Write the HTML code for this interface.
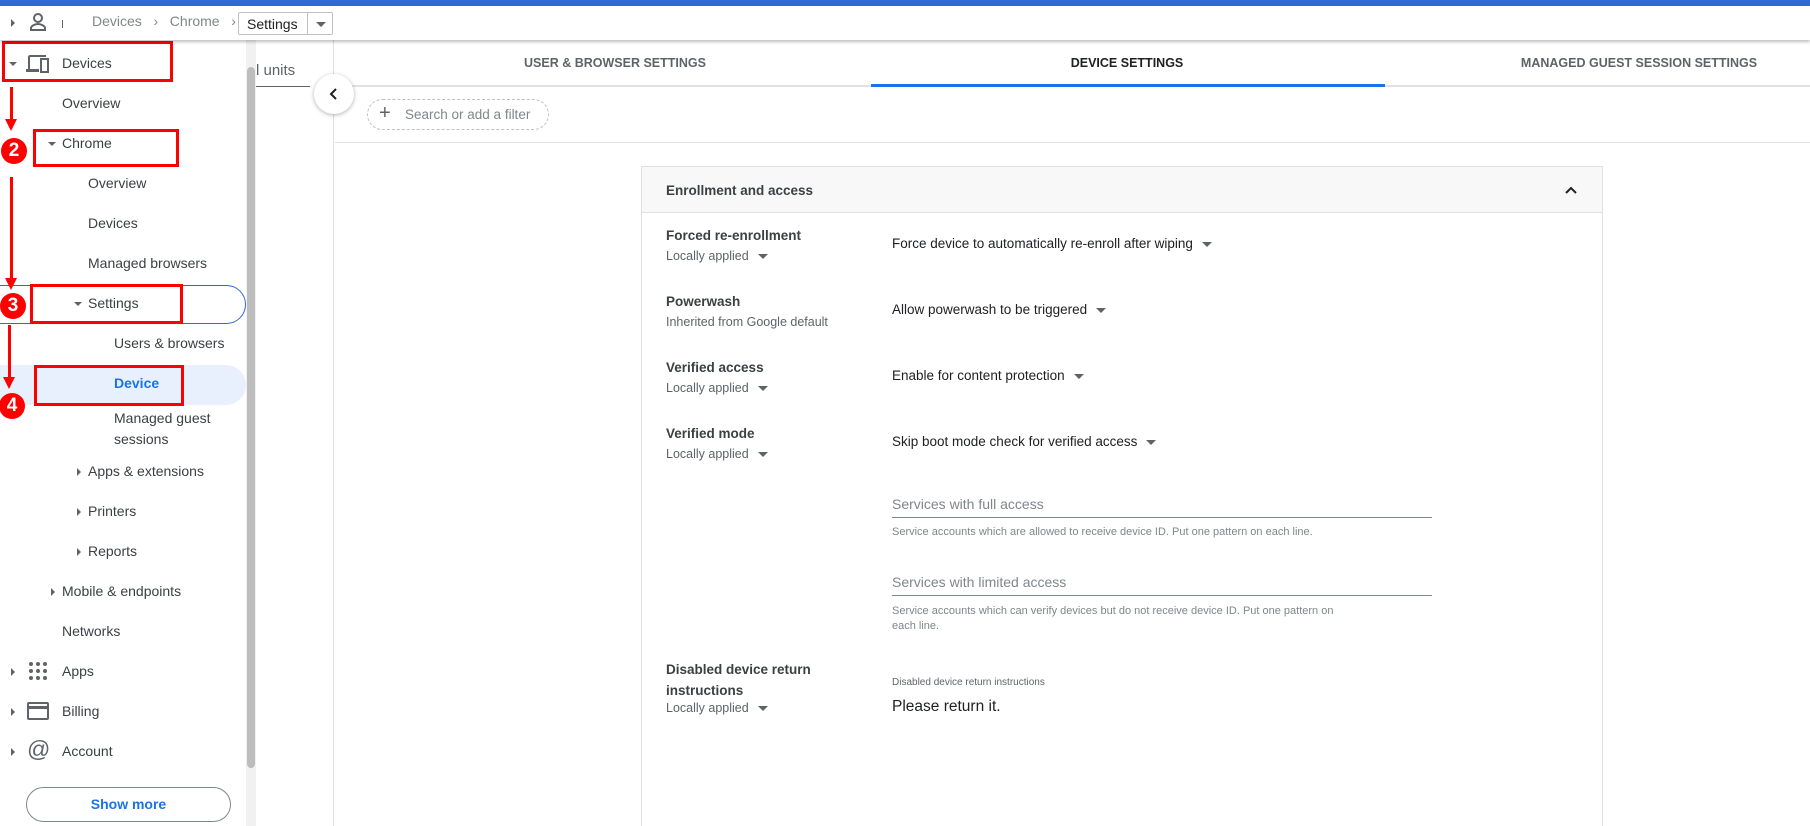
<!DOCTYPE html>
<html style="height:826px;overflow:hidden"><head><meta charset="utf-8"><style>
*{box-sizing:border-box;margin:0;padding:0}
html,body{width:1810px;height:826px;overflow:hidden}
body{background:#fff;font-family:"Liberation Sans",Arial,sans-serif;color:#3c4043;position:relative}
.a{position:absolute;white-space:nowrap}
.sb{font-size:14px;color:#3c4043}
.tri{position:absolute;width:0;height:0}
.tr{border-top:4px solid transparent;border-bottom:4px solid transparent;border-left:4px solid #5f6368}
.td{border-left:4px solid transparent;border-right:4px solid transparent;border-top:4px solid #5f6368}
.rb{position:absolute;border:3px solid #f00}
.num{position:absolute;width:26px;height:26px;border-radius:50%;background:#f00;color:#fff;font-weight:bold;font-size:19px;text-align:center;line-height:26px}
.vl{position:absolute;width:3px;background:#f00}
.ah{position:absolute;width:0;height:0;border-left:6px solid transparent;border-right:6px solid transparent;border-top:12px solid #f00}
.lab{font-size:13.5px;color:#3c4043;font-weight:bold}
.sub{font-size:12.5px;color:#5f6368}
.val{font-size:13.5px;color:#202124}
.dd{display:inline-block;width:0;height:0;border-left:5px solid transparent;border-right:5px solid transparent;border-top:5px solid #5f6368;margin-left:9px;vertical-align:middle}
</style></head><body>
<div class="a" style="left:0;top:0;width:1810px;height:6px;background:#3367d6"></div>
<div class="a" style="left:0;top:6px;width:1810px;height:34px;background:#fff;box-shadow:0 2px 3px rgba(0,0,0,.25);z-index:3">
 <div class="tri tr" style="left:11px;top:13px"></div>
 <svg class="a" style="left:28px;top:6px" width="20" height="20" viewBox="0 0 20 20"><circle cx="10" cy="6" r="4" fill="none" stroke="#5f6368" stroke-width="2"/><path d="M3 18v-2c0-2 4-4 7-4s7 2 7 4v2z" fill="none" stroke="#5f6368" stroke-width="2"/></svg>
 <div class="a" style="left:62px;top:14px;width:1px;height:8px;background:#5f6368"></div>
 <div class="a" style="left:92px;top:7px;font-size:14px;color:#80868b">Devices&nbsp;&nbsp;&nbsp;›&nbsp;&nbsp;&nbsp;Chrome&nbsp;&nbsp;&nbsp;›</div>
 <div class="a" style="left:238px;top:6px;width:95px;height:23px;border:1px solid #bdc1c6;border-radius:2px"><span class="a" style="left:8px;top:3px;font-size:14px;color:#202124">Settings</span><div class="a" style="left:68px;top:0;width:1px;height:21px;background:#bdc1c6"></div><div class="tri td" style="left:77px;top:9px;border-left-width:5px;border-right-width:5px;border-top-width:5px"></div></div>
</div>
<div class="a" style="left:246px;top:40px;width:10px;height:786px;background:#f1f1f1"></div>
<div class="a" style="left:247px;top:67px;width:8px;height:701px;background:#bdbdbd;border-radius:4px"></div>
<div class="a" style="left:0;top:365px;width:246px;height:40px;background:#e8f0fe;border-radius:0 20px 20px 0"></div>
<div class="a" style="left:-10px;top:285px;width:256px;height:39px;border:1px solid #3367d6;border-radius:0 20px 20px 0"></div>
<div class="tri td" style="left:9px;top:62px"></div>
<svg class="a" style="left:26px;top:53px" width="24" height="22" viewBox="0 0 24 22"><path d="M4 4h16V2H4c-1 0-2 1-2 2v12H0v3h13v-3H4z" fill="#5f6368"/><path d="M15 6h7v13h-7z" fill="none" stroke="#5f6368" stroke-width="2"/></svg>
<div class="a sb" style="left:62px;top:55px">Devices</div>
<div class="a sb" style="left:62px;top:95px">Overview</div>
<div class="tri td" style="left:48px;top:142px"></div>
<div class="a sb" style="left:62px;top:135px">Chrome</div>
<div class="a sb" style="left:88px;top:175px">Overview</div>
<div class="a sb" style="left:88px;top:215px">Devices</div>
<div class="a sb" style="left:88px;top:255px">Managed browsers</div>
<div class="tri td" style="left:74px;top:302px"></div>
<div class="a sb" style="left:88px;top:295px">Settings</div>
<div class="a sb" style="left:114px;top:335px">Users &amp; browsers</div>
<div class="a sb" style="left:114px;top:375px;color:#1a73e8;font-weight:bold">Device</div>
<div class="a sb" style="left:114px;top:408px;line-height:21px">Managed guest<br>sessions</div>
<div class="tri tr" style="left:77px;top:468px"></div>
<div class="a sb" style="left:88px;top:463px">Apps &amp; extensions</div>
<div class="tri tr" style="left:77px;top:508px"></div>
<div class="a sb" style="left:88px;top:503px">Printers</div>
<div class="tri tr" style="left:77px;top:548px"></div>
<div class="a sb" style="left:88px;top:543px">Reports</div>
<div class="tri tr" style="left:51px;top:588px"></div>
<div class="a sb" style="left:62px;top:583px">Mobile &amp; endpoints</div>
<div class="a sb" style="left:62px;top:623px">Networks</div>
<div class="tri tr" style="left:11px;top:668px"></div>
<svg class="a" style="left:28px;top:661px" width="20" height="20" viewBox="0 0 20 20" fill="#5f6368"><circle cx="3" cy="3" r="2"/><circle cx="10" cy="3" r="2"/><circle cx="17" cy="3" r="2"/><circle cx="3" cy="10" r="2"/><circle cx="10" cy="10" r="2"/><circle cx="17" cy="10" r="2"/><circle cx="3" cy="17" r="2"/><circle cx="10" cy="17" r="2"/><circle cx="17" cy="17" r="2"/></svg>
<div class="a sb" style="left:62px;top:663px">Apps</div>
<div class="tri tr" style="left:11px;top:708px"></div>
<svg class="a" style="left:27px;top:702px" width="22" height="18" viewBox="0 0 22 18"><rect x="1" y="1" width="20" height="16" rx="1" fill="none" stroke="#5f6368" stroke-width="2"/><rect x="1" y="4" width="20" height="3" fill="#5f6368"/></svg>
<div class="a sb" style="left:62px;top:703px">Billing</div>
<div class="tri tr" style="left:11px;top:748px"></div>
<div class="a" style="left:27px;top:736px;font-size:23px;color:#5f6368">@</div>
<div class="a sb" style="left:62px;top:743px">Account</div>
<div class="a" style="left:26px;top:787px;width:205px;height:35px;border:1px solid #80868b;border-radius:18px;text-align:center;line-height:33px;font-size:14px;font-weight:bold;color:#1a73e8">Show more</div>
<div class="rb" style="left:2px;top:41px;width:171px;height:41px"></div>
<div class="rb" style="left:33px;top:129px;width:146px;height:38px"></div>
<div class="rb" style="left:30px;top:284px;width:153px;height:40px"></div>
<div class="rb" style="left:34px;top:365px;width:150px;height:41px"></div>
<div class="vl" style="left:10px;top:87px;height:34px"></div><div class="ah" style="left:5px;top:119px"></div>
<div class="vl" style="left:10px;top:177px;height:103px"></div><div class="ah" style="left:5px;top:278px"></div>
<div class="vl" style="left:8px;top:325px;height:54px"></div><div class="ah" style="left:3px;top:377px"></div>
<div class="num" style="left:1px;top:138px">2</div>
<div class="num" style="left:0;top:293px">3</div>
<div class="num" style="left:-1px;top:393px">4</div>
<div class="a" style="left:256px;top:40px;width:78px;height:786px;background:#fff;border-right:1px solid #e0e0e0"></div>
<div class="a" style="left:256px;top:62px;font-size:15px;color:#5f6368">l units</div>
<div class="a" style="left:256px;top:86px;width:54px;height:1px;background:#5f6368"></div>
<div class="a" style="left:314px;top:74px;width:40px;height:40px;border-radius:50%;background:#fff;box-shadow:0 1px 4px rgba(0,0,0,.3);z-index:2"><svg class="a" style="left:14px;top:13px" width="12" height="14" viewBox="0 0 12 14"><path d="M8 2L3 7l5 5" fill="none" stroke="#202124" stroke-width="2"/></svg></div>
<div class="a" style="left:335px;top:85px;width:1475px;height:2px;background:#e0e0e0"></div>
<div class="a" style="left:871px;top:84px;width:514px;height:3px;background:#1a73e8"></div>
<div class="a" style="left:615px;top:56px;transform:translateX(-50%);font-size:12.5px;color:#5f6368;font-weight:bold">USER &amp; BROWSER SETTINGS</div>
<div class="a" style="left:1127px;top:56px;transform:translateX(-50%);font-size:12.5px;color:#202124;font-weight:bold">DEVICE SETTINGS</div>
<div class="a" style="left:1639px;top:56px;transform:translateX(-50%);font-size:12.5px;color:#5f6368;font-weight:bold">MANAGED GUEST SESSION SETTINGS</div>
<div class="a" style="left:367px;top:99px;width:182px;height:31px;border:1px dashed #bdc1c6;border-radius:16px"><span class="a" style="left:11px;top:2px;font-size:20px;color:#5f6368">+</span><span class="a" style="left:37px;top:7px;font-size:13.5px;color:#80868b">Search or add a filter</span></div>
<div class="a" style="left:335px;top:142px;width:1475px;height:1px;background:#e0e0e0"></div>
<div class="a" style="left:641px;top:166px;width:962px;height:660px;border:1px solid #e0e0e0;border-bottom:none"></div>
<div class="a" style="left:642px;top:167px;width:960px;height:46px;background:#f8f8f8;border-bottom:1px solid #e0e0e0"></div>
<div class="a lab" style="left:666px;top:183px">Enrollment and access</div>
<svg class="a" style="left:1565px;top:186px" width="12" height="8" viewBox="0 0 12 8"><path d="M1 7l5-5 5 5" fill="none" stroke="#202124" stroke-width="2"/></svg>
<div class="a lab" style="left:666px;top:228px">Forced re-enrollment</div>
<div class="a sub" style="left:666px;top:249px">Locally applied<span class="dd"></span></div>
<div class="a val" style="left:892px;top:236px">Force device to automatically re-enroll after wiping<span class="dd"></span></div>
<div class="a lab" style="left:666px;top:294px">Powerwash</div>
<div class="a sub" style="left:666px;top:315px">Inherited from Google default</div>
<div class="a val" style="left:892px;top:302px">Allow powerwash to be triggered<span class="dd"></span></div>
<div class="a lab" style="left:666px;top:360px">Verified access</div>
<div class="a sub" style="left:666px;top:381px">Locally applied<span class="dd"></span></div>
<div class="a val" style="left:892px;top:368px">Enable for content protection<span class="dd"></span></div>
<div class="a lab" style="left:666px;top:426px">Verified mode</div>
<div class="a sub" style="left:666px;top:447px">Locally applied<span class="dd"></span></div>
<div class="a val" style="left:892px;top:434px">Skip boot mode check for verified access<span class="dd"></span></div>
<div class="a" style="left:892px;top:496px;font-size:14px;color:#80868b">Services with full access</div>
<div class="a" style="left:892px;top:517px;width:540px;height:1px;background:#80868b"></div>
<div class="a" style="left:892px;top:526px;font-size:11px;color:#80868b">Service accounts which are allowed to receive device ID. Put one pattern on each line.</div>
<div class="a" style="left:892px;top:574px;font-size:14px;color:#80868b">Services with limited access</div>
<div class="a" style="left:892px;top:595px;width:540px;height:1px;background:#80868b"></div>
<div class="a" style="left:892px;top:604px;font-size:11px;color:#80868b;line-height:15px">Service accounts which can verify devices but do not receive device ID. Put one pattern on<br>each line.</div>
<div class="a lab" style="left:666px;top:659px;line-height:21px">Disabled device return<br>instructions</div>
<div class="a sub" style="left:666px;top:701px">Locally applied<span class="dd"></span></div>
<div class="a" style="left:892px;top:677px;font-size:10px;color:#5f6368">Disabled device return instructions</div>
<div class="a" style="left:892px;top:698px;font-size:15.5px;color:#202124">Please return it.</div>
</body></html>
